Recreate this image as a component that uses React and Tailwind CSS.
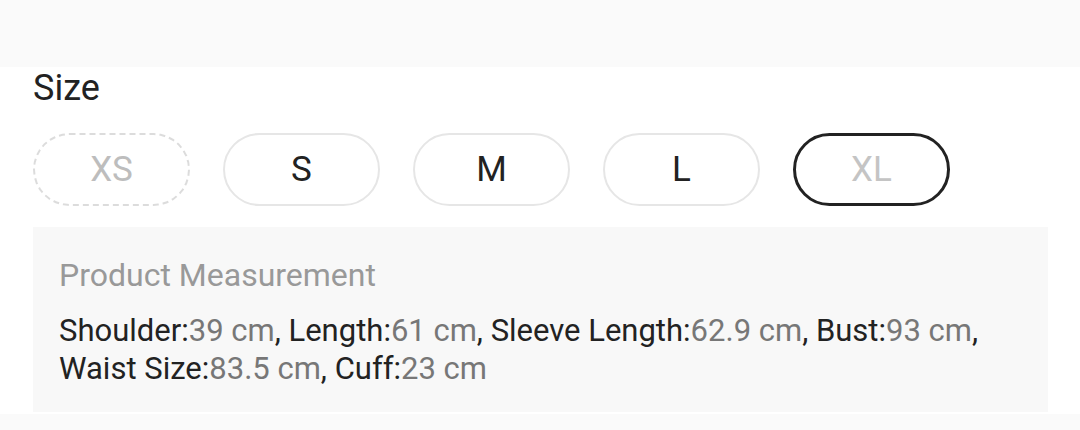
import React, { useState } from 'react';

const SIZES = [
  { label: 'XS', state: 'soldout' },
  { label: 'S', state: 'normal' },
  { label: 'M', state: 'normal' },
  { label: 'L', state: 'normal' },
  { label: 'XL', state: 'selected' },
];

const MEASUREMENTS = [
  ['Shoulder', '39 cm'],
  ['Length', '61 cm'],
  ['Sleeve Length', '62.9 cm'],
  ['Bust', '93 cm'],
  ['Waist Size', '83.5 cm'],
  ['Cuff', '23 cm'],
];

const SizeButton = ({ label, state, onClick }) => {
  let cls = 'border-2 border-[#e6e6e6] text-[#222]';
  if (state === 'soldout') cls = 'border-2 border-dashed border-[#dcdcdc] text-[#bdbdbd]';
  if (state === 'selected') cls = 'border-[3px] border-[#222] text-[#c4c4c4]';

  return (
    <button
      onClick={onClick}
      className={`h-[73px] w-[157px] shrink-0 rounded-full bg-white flex items-center justify-center text-[35px] leading-none ${cls}`}
    >
      {label}
    </button>
  );
};

const App = () => {
  const [selected, setSelected] = useState('XL');

  return (
    <div className="w-[1080px] h-[430px] bg-white overflow-hidden" style={{ fontFamily: 'Roboto, "Liberation Sans", sans-serif' }}>
      <div className="h-[67px] bg-[#fafafa]" />

      <div className="px-[33px]">
        <div className="h-[66px] pt-[1px] text-[36px] text-[#222] leading-[40px]">Size</div>

        <div className="flex gap-[33px]">
          {SIZES.map((s) => (
            <SizeButton
              key={s.label}
              label={s.label}
              state={s.label === selected ? 'selected' : s.state}
              onClick={() => s.state !== 'soldout' && setSelected(s.label)}
            />
          ))}
        </div>

        <div className="mt-[21px] w-[1015px] h-[185px] bg-[#f8f8f8] px-[26px] pt-[30px]">
          <div className="text-[32px] leading-[36px] text-[#999]">Product Measurement</div>
          <div className="mt-[19px] text-[31px] leading-[38px] text-[#222]">
            {MEASUREMENTS.map(([k, v], i) => (
              <span key={k}>
                {k}:<span className="text-[#777]">{v}</span>
                {i < MEASUREMENTS.length - 1 ? ', ' : ''}
              </span>
            ))}
          </div>
        </div>
      </div>

      <div className="mt-[2px] h-[20px] bg-[#fafafa]" />
    </div>
  );
};

export default App;
